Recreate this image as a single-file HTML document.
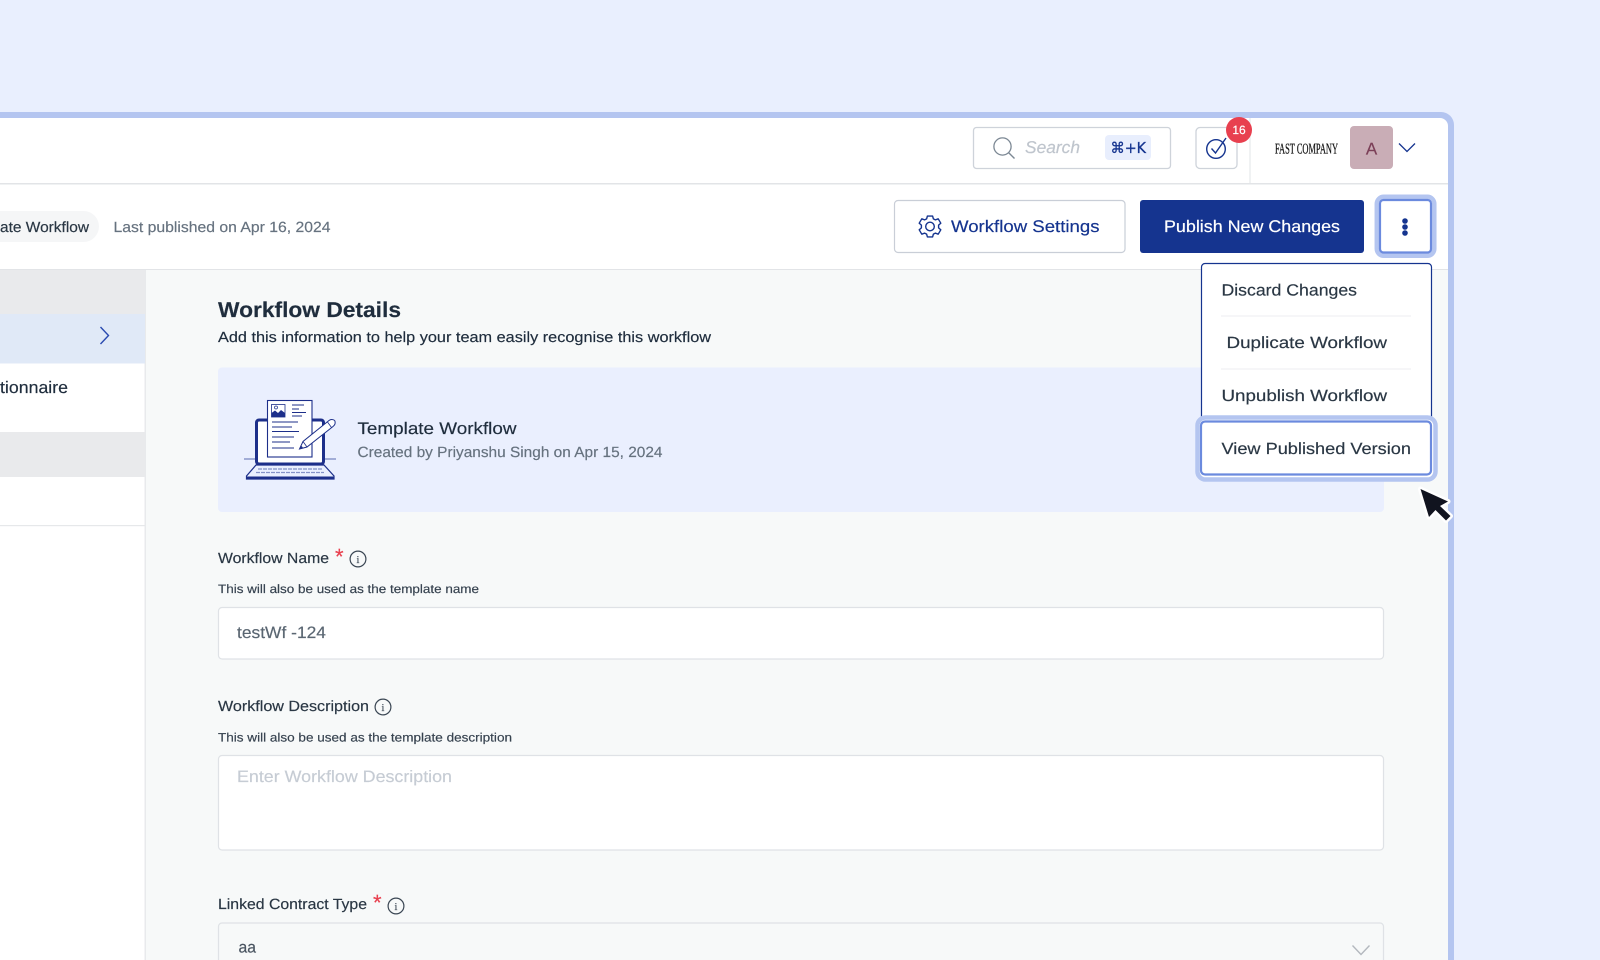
<!DOCTYPE html>
<html lang="en">
<head>
<meta charset="utf-8">
<title>Workflow Details</title>
<style>
html,body{margin:0;padding:0;width:1600px;height:960px;overflow:hidden;background:#e9effe}
svg{display:block}
text{font-family:"Liberation Sans",sans-serif;text-rendering:geometricPrecision;fill:currentColor;stroke:currentColor;stroke-width:.18}
.b{font-size:14.8px;color:#2a3744}
.g{font-size:14.8px;color:#66727f}
.s{font-size:12.2px;color:#36424f}
.m{font-size:16.2px;color:#2a3744}
.n{color:#15348f}
</style>
</head>
<body>
<svg width="1600" height="960" viewBox="0 0 1600 960" xmlns="http://www.w3.org/2000/svg">
<rect width="1600" height="960" fill="#e9effe"/>

<!-- frame -->
<rect x="-30" y="112" width="1484" height="900" rx="13" fill="#b4c5f0"/>
<rect x="-30" y="118" width="1478" height="890" rx="8" fill="#fff"/>

<!-- top bar -->
<rect x="0" y="183" width="1448" height="1.5" fill="#e2e4e7"/>
<rect x="1249.5" y="118" width="1" height="66" fill="#e2e4e7"/>
<rect x="973.5" y="127.5" width="197" height="41" rx="3" fill="#fff" stroke="#ced3da" stroke-width="1.3"/>
<circle cx="1002.5" cy="146.5" r="8.6" fill="none" stroke="#7c8894" stroke-width="1.3"/>
<path d="M1008.6 152.6L1014.5 158.5" stroke="#7c8894" stroke-width="1.4" fill="none"/>
<text x="1025" y="153" font-size="17" font-style="italic" color="#bfc5cd" textLength="55" lengthAdjust="spacingAndGlyphs">Search</text>
<rect x="1105" y="135" width="46" height="25" rx="4" fill="#e8eefd"/>
<text x="1110.5" y="153" style="font-family:'DejaVu Sans',sans-serif;stroke-width:.3" font-size="15" color="#15348f" textLength="35.5" lengthAdjust="spacingAndGlyphs">⌘+K</text>

<rect x="1196" y="127.5" width="41" height="41" rx="4" fill="#fff" stroke="#ced3da" stroke-width="1.3"/>
<circle cx="1216" cy="149" r="9.3" fill="none" stroke="#15348f" stroke-width="1.4"/>
<path d="M1211.5 148.5L1215.5 153L1226 138" fill="none" stroke="#15348f" stroke-width="1.4"/>
<circle cx="1239" cy="130" r="13" fill="#e8404f"/>
<text x="1239" y="134.2" font-size="12" color="#fff" text-anchor="middle">16</text>

<text x="1275" y="153.5" style="font-family:'Liberation Serif',serif;stroke-width:.25" font-size="15" color="#141414" textLength="63" lengthAdjust="spacingAndGlyphs">FAST COMPANY</text>
<rect x="1350" y="126" width="43" height="43" rx="4" fill="#c9adb6"/>
<text x="1371.5" y="154.5" font-size="17" color="#7b3f57" text-anchor="middle">A</text>
<path d="M1399 143.5L1407 151.5L1415 143.5" fill="none" stroke="#15348f" stroke-width="1.3"/>

<!-- toolbar -->
<rect x="0" y="269" width="1448" height="1.3" fill="#e2e4e7"/>
<path d="M-20 211H83.5a15.5 15.5 0 0 1 0 31H-20z" fill="#f5f6f7"/>
<text class="b" x="0" y="232" textLength="89" lengthAdjust="spacingAndGlyphs">ate Workflow</text>
<text class="g" x="113.5" y="232" textLength="217" lengthAdjust="spacingAndGlyphs">Last published on Apr 16, 2024</text>

<rect x="894.5" y="200.5" width="230.5" height="52" rx="3.5" fill="#fff" stroke="#c9ced7" stroke-width="1.2"/>
<g transform="translate(930 226.5)" fill="none" stroke="#15348f" stroke-width="1.4">
<circle r="4.3"/>
<path d="M-2.6-10.4H2.6L3.4-7.6 5.4-6.6 8.2-7.7 10.8-3.3 8.6-1.4V1.4L10.8 3.3 8.2 7.7 5.4 6.6 3.4 7.6 2.6 10.4H-2.6L-3.4 7.6-5.4 6.6-8.2 7.7-10.8 3.3-8.6 1.4V-1.4L-10.8-3.3-8.2-7.7-5.4-6.6-3.4-7.6Z" stroke-linejoin="round"/>
</g>
<text x="951" y="232" font-size="16.8" class="n" textLength="148.5" lengthAdjust="spacingAndGlyphs">Workflow Settings</text>

<rect x="1140" y="200" width="224" height="53" rx="3" fill="#15348f"/>
<text x="1164" y="232" font-size="16.8" color="#fff" textLength="176" lengthAdjust="spacingAndGlyphs">Publish New Changes</text>

<rect x="1376.8" y="196.8" width="57.5" height="59" rx="7" fill="#fff" stroke="#b4c5f0" stroke-width="4.5"/>
<rect x="1380" y="200" width="51" height="52.5" rx="3.5" fill="#fff" stroke="#6b8ade" stroke-width="2.2"/>
<circle cx="1405" cy="221" r="2.8" fill="#15348f"/>
<circle cx="1405" cy="227" r="2.8" fill="#15348f"/>
<circle cx="1405" cy="233" r="2.8" fill="#15348f"/>

<!-- sidebar -->
<rect x="0" y="270" width="1448" height="740" fill="#f7f9f9"/>
<rect x="0" y="270" width="146" height="700" fill="#fff"/>
<rect x="144.5" y="270" width="1.5" height="700" fill="#e8eaec"/>
<rect x="0" y="270" width="145" height="44" fill="#e9eaec"/>
<rect x="0" y="314" width="145" height="49.5" fill="#e0e9f7"/>
<path d="M100.5 327L108.5 335.5L100.5 344" fill="none" stroke="#2a4ab0" stroke-width="1.4"/>
<text x="0" y="393" font-size="16.8" color="#1f2d3d" textLength="68" lengthAdjust="spacingAndGlyphs">tionnaire</text>
<rect x="0" y="432" width="145" height="45" fill="#e9eaec"/>
<rect x="0" y="525" width="145" height="1.2" fill="#e6e8ea"/>

<!-- heading -->
<text x="218" y="317" font-size="21.5" font-weight="700" color="#1f2d3d" textLength="183" lengthAdjust="spacingAndGlyphs">Workflow Details</text>
<text x="218" y="342" class="b" style="color:#1f2d3d" textLength="493" lengthAdjust="spacingAndGlyphs">Add this information to help your team easily recognise this workflow</text>

<!-- card -->
<rect x="218" y="367.5" width="1166" height="144.5" rx="4" fill="#eaeffe"/>
<g>
<path d="M244 459H336" stroke="#5a6bb0" stroke-width="1"/>
<rect x="256.5" y="420" width="67" height="44" rx="2.5" fill="#fff" stroke="#1d2f8a" stroke-width="3"/>
<path d="M256 465H324L334 476V479H246.5V476Z" fill="#eaeffe" stroke="#1d2f8a" stroke-width="1.2"/>
<rect x="246.5" y="476.5" width="87.5" height="2.8" rx="1" fill="#1d2f8a"/>
<path d="M258 469H322M256 472.5H324" stroke="#8592c8" stroke-width="1.2" stroke-dasharray="4 1"/>
<rect x="267.5" y="400.5" width="44.5" height="56.5" fill="#fff" stroke="#1d2f8a" stroke-width="1.1"/>
<rect x="271.5" y="404.5" width="13.5" height="12.5" fill="#fff" stroke="#1d2f8a" stroke-width=".8"/>
<path d="M271.5 417V413L275 410.5 278 413 281 410 285 413V417Z" fill="#1d2f8a"/>
<circle cx="276" cy="407.5" r="1.5" fill="none" stroke="#1d2f8a" stroke-width=".7"/>
<path d="M292 405H304M292 409H299M292 412.5H306M292 416H302" stroke="#1d2f8a" stroke-width="1.1"/>
<path d="M272 422H298M272 427H292M272 431.5H299M272 437H294M272 442H290M272 448H294" stroke="#1d2f8a" stroke-width="1.1"/>
<path d="M299.5 449L303 441.5 329 420.5C331.5 418.5 335 420 335 421.5 335.5 423.5 335 425 333 426.5L307 447Z" fill="#fff" stroke="#1d2f8a" stroke-width="1"/>
<path d="M303 441.5L307 447M327.5 422L331.5 427.5" stroke="#1d2f8a" stroke-width=".8" fill="none"/>
<path d="M299.5 449L301 445.5 303 447.5Z" fill="#1d2f8a"/>
</g>
<text x="357.5" y="434" font-size="16.8" color="#1f2d3d" textLength="159" lengthAdjust="spacingAndGlyphs">Template Workflow</text>
<text x="357.5" y="457" class="g" textLength="305" lengthAdjust="spacingAndGlyphs">Created by Priyanshu Singh on Apr 15, 2024</text>

<!-- workflow name -->
<text x="218" y="563" class="b" textLength="111" lengthAdjust="spacingAndGlyphs">Workflow Name</text>
<text x="335" y="564" font-size="22" color="#e8404f">*</text>
<circle cx="358" cy="559" r="7.9" fill="none" stroke="#3a4653" stroke-width="1.2"/>
<text x="358" y="563" style="font-family:'Liberation Serif',serif" font-size="10.5" color="#3a4653" text-anchor="middle">i</text>
<text x="218" y="593" class="s" textLength="261" lengthAdjust="spacingAndGlyphs">This will also be used as the template name</text>
<rect x="218.5" y="607.5" width="1165" height="51.5" rx="3.5" fill="#fff" stroke="#dfe2e6" stroke-width="1.2"/>
<text x="237" y="638" font-size="16.5" color="#5a6672" textLength="89" lengthAdjust="spacingAndGlyphs">testWf -124</text>

<!-- description -->
<text x="218" y="711" class="b" textLength="151" lengthAdjust="spacingAndGlyphs">Workflow Description</text>
<circle cx="383" cy="707" r="7.9" fill="none" stroke="#3a4653" stroke-width="1.2"/>
<text x="383" y="711" style="font-family:'Liberation Serif',serif" font-size="10.5" color="#3a4653" text-anchor="middle">i</text>
<text x="218" y="741.5" class="s" textLength="294" lengthAdjust="spacingAndGlyphs">This will also be used as the template description</text>
<rect x="218.5" y="755.5" width="1165" height="94.5" rx="3.5" fill="#fff" stroke="#dfe2e6" stroke-width="1.2"/>
<text x="237" y="782" font-size="16.5" color="#c6ccd4" textLength="215" lengthAdjust="spacingAndGlyphs">Enter Workflow Description</text>

<!-- linked contract type -->
<text x="218" y="909" class="b" textLength="149" lengthAdjust="spacingAndGlyphs">Linked Contract Type</text>
<text x="373" y="910" font-size="22" color="#e8404f">*</text>
<circle cx="396" cy="906" r="7.9" fill="none" stroke="#3a4653" stroke-width="1.2"/>
<text x="396" y="910" style="font-family:'Liberation Serif',serif" font-size="10.5" color="#3a4653" text-anchor="middle">i</text>
<rect x="218.5" y="923" width="1165" height="60" rx="3.5" fill="#f7f9f9" stroke="#dfe2e6" stroke-width="1.2"/>
<text x="238.5" y="952.5" font-size="16" color="#4a5561" textLength="17.5" lengthAdjust="spacingAndGlyphs">aa</text>
<path d="M1352.5 945.5L1361 954.5L1369.5 945.5" fill="none" stroke="#b3b8be" stroke-width="1.4"/>

<!-- dropdown -->
<rect x="1201.5" y="263.5" width="230" height="170" rx="3.5" fill="#fff" stroke="#15348f" stroke-width="1.2"/>
<text class="m" x="1221.5" y="295.5" textLength="135.5" lengthAdjust="spacingAndGlyphs">Discard Changes</text>
<rect x="1221" y="315.5" width="190" height="1" fill="#eceef0"/>
<text class="m" x="1226.5" y="348" textLength="160.5" lengthAdjust="spacingAndGlyphs">Duplicate Workflow</text>
<rect x="1221" y="368.5" width="190" height="1" fill="#eceef0"/>
<text class="m" x="1221.5" y="401" textLength="165.5" lengthAdjust="spacingAndGlyphs">Unpublish Workflow</text>
<rect x="1197.5" y="417.5" width="238" height="62" rx="8" fill="#fff" stroke="#b4c5f0" stroke-width="4.5"/>
<rect x="1201" y="421.5" width="230" height="53" rx="4" fill="#fff" stroke="#6b8ade" stroke-width="2.2"/>
<text class="m" x="1221.5" y="454" textLength="189.5" lengthAdjust="spacingAndGlyphs">View Published Version</text>

<!-- cursor -->
<path d="M1420.5 489L1429 517L1435.5 510L1446 520.5L1450.5 516L1440 506L1448 501.5Z" fill="#11141f" stroke="#fff" stroke-width="5" stroke-linejoin="round" paint-order="stroke"/>
</svg>
</body>
</html>
